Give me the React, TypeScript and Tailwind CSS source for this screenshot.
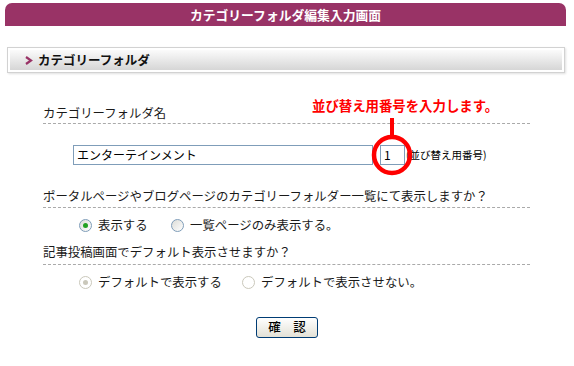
import React from 'react';

const FONT = { fontFamily: '"Noto Sans CJK JP", "Noto Sans", sans-serif' };

function Radio({ checked, disabled }: { checked?: boolean; disabled?: boolean }) {
  return (
    <span
      className={`flex items-center justify-center w-[13px] h-[13px] rounded-full border shrink-0 ${
        disabled ? 'border-[#cac8bb] bg-white' : 'border-[#7f9db9] bg-gradient-to-br from-[#dcdcd7] to-white'
      }`}
    >
      {checked && <span className={`w-[5px] h-[5px] rounded-full ${disabled ? 'bg-[#cac8bb]' : 'bg-[#21a121]'}`} />}
    </span>
  );
}

function Label({ text, pb }: { text: string; pb: string }) {
  return (
    <div className={`w-[487px] border-b border-dashed border-[#aaaaaa] text-[12.4px] leading-[16px] text-[#1a1a1a] ${pb}`}>
      {text}
    </div>
  );
}

export default function App() {
  return (
    <div className="relative w-[574px] h-[366px] bg-white overflow-hidden" style={FONT}>
      <div className="ml-[5px] mt-[3px] w-[561px] h-[23px] rounded-t-[7px] bg-[#993366] flex items-center justify-center text-white font-bold text-[12.8px]">
        カテゴリーフォルダ編集入力画面
      </div>

      <div className="ml-[7px] mt-[21px] w-[558px] border border-[#d2d2d2] p-[2px] shadow-[1px_1px_2px_rgba(0,0,0,0.12)]">
        <div className="h-[20px] bg-gradient-to-b from-[#fbfbfb] to-[#d6d6d6] flex items-center pl-[15px] gap-[5px]">
          <svg width="8" height="9" viewBox="0 0 8 9">
            <path d="M1 1 L6 4.5 L1 8" fill="none" stroke="#993366" strokeWidth="2.2" />
          </svg>
          <span className="text-[12.5px] font-bold text-[#111]">カテゴリーフォルダ</span>
        </div>
      </div>

      <div className="pl-[43px]">
        <div className="mt-[32px]">
          <Label text="カテゴリーフォルダ名" pb="pb-[2px]" />
        </div>

        <div className="mt-[21px] ml-[30px] flex items-center h-[20px]">
          <div className="w-[300px] h-[20px] border border-[#7f9db9] flex items-center pl-[3px] text-[12px] text-black">
            エンターテインメント
          </div>
          <div className="ml-[7px] w-[25px] h-[20px] border border-[#7f9db9] flex items-center pl-[3px] text-[12px] text-black">
            1
          </div>
          <span className="ml-[1px] text-[10.5px] text-black">(並び替え用番号)</span>
        </div>

        <div className="mt-[23px]">
          <Label text="ポータルページやブログページのカテゴリーフォルダー一覧にて表示しますか？" pb="pb-[3px]" />
        </div>

        <div className="mt-[9px] ml-[36px] flex items-center h-[16px] text-[12.4px] text-[#1a1a1a]">
          <div className="w-[92px] flex items-center gap-[6px]">
            <Radio checked />
            <span>表示する</span>
          </div>
          <div className="flex items-center gap-[6px]">
            <Radio />
            <span>一覧ページのみ表示する。</span>
          </div>
        </div>

        <div className="mt-[11px]">
          <Label text="記事投稿画面でデフォルト表示させますか？" pb="pb-[4px]" />
        </div>

        <div className="mt-[9px] ml-[36px] flex items-center h-[16px] text-[12.4px] text-[#1a1a1a]">
          <div className="w-[163px] flex items-center gap-[6px]">
            <Radio checked disabled />
            <span>デフォルトで表示する</span>
          </div>
          <div className="flex items-center gap-[6px]">
            <Radio disabled />
            <span>デフォルトで表示させない。</span>
          </div>
        </div>
      </div>

      <div className="mt-[27px] flex justify-center">
        <button className="w-[62px] h-[21px] border border-[#003c74] rounded-[3px] bg-gradient-to-b from-white to-[#e3e1d6] text-[12.5px] font-medium text-black flex items-center justify-center">
          確　認
        </button>
      </div>

      <div className="absolute left-[312px] top-[97px] text-[13.4px] font-bold text-[#ff0000] leading-[16px] whitespace-nowrap">
        並び替え用番号を入力します。
      </div>
      <svg className="absolute left-[370px] top-[116px]" width="44" height="62" viewBox="0 0 44 62">
        <line x1="22" y1="2" x2="22" y2="21" stroke="#ff0000" strokeWidth="4" />
        <circle cx="22" cy="39" r="18" fill="none" stroke="#ff0000" strokeWidth="4.5" />
      </svg>
    </div>
  );
}
